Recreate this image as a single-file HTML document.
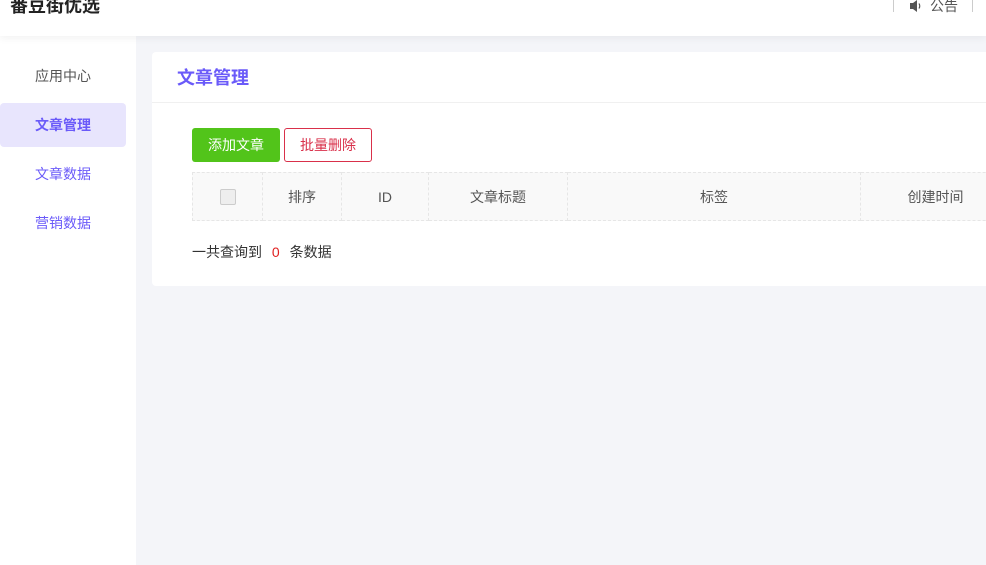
<!DOCTYPE html>
<html><head><meta charset="utf-8"><style>
*{margin:0;padding:0;box-sizing:border-box}
body{width:986px;height:565px;overflow:hidden;background:#f4f5f9;font-family:"Liberation Sans","Noto Sans CJK SC",sans-serif;font-size:14px;color:#333;position:relative}
.hdr{position:absolute;left:0;top:0;width:986px;height:36px;background:#fff;box-shadow:0 2px 8px rgba(0,0,0,.06);z-index:2}
.logo{position:absolute;left:10px;top:-6px;font-size:18px;font-weight:bold;color:#222;line-height:24px}
.sep{position:absolute;top:0;width:1px;height:12px;background:#ccc}
.side{position:absolute;left:0;top:36px;width:136px;height:529px;background:#fff}
.side div{position:absolute;left:0;width:126px;height:44px;line-height:44px;text-align:center;font-size:14px;color:#6a5af9}
.card{position:absolute;left:152px;top:52px;width:900px;height:234px;background:#fff;border-radius:4px}
.ch{height:51px;border-bottom:1px solid #f0f0f0;padding-left:25px;line-height:52px;font-size:18px;font-weight:bold;color:#6a5af9}
.btn{position:absolute;top:76px;height:34px;width:88px;line-height:32px;text-align:center;border-radius:3px;font-size:14px}
table{position:absolute;left:40px;top:120px;border-collapse:collapse;background:#f9f9f9;table-layout:fixed;width:818px}
td{border:1px dashed #e6e6e6;height:48px;text-align:center;color:#555;font-size:14px}
</style></head><body>
<div class="hdr">
<div class="logo">番豆街优选</div>
<div class="sep" style="left:893px"></div>
<svg style="position:absolute;left:909px;top:0" width="14" height="12" viewBox="0 0 14 12"><path d="M1 3h3l4-3v12l-4-3H1z" fill="#555"/><path d="M10 3.5q1.5 2.5 0 5" stroke="#555" fill="none" stroke-width="1.2"/></svg>
<div style="position:absolute;left:930px;top:-3px;font-size:14px;color:#555;line-height:18px">公告</div>
<div class="sep" style="left:972px"></div>
</div>
<div class="side">
<div style="top:18px;color:#555">应用中心</div>
<div style="top:67px;background:#e8e5fd;border-radius:4px;font-weight:bold">文章管理</div>
<div style="top:116px">文章数据</div>
<div style="top:165px">营销数据</div>
</div>
<div class="card">
<div class="ch">文章管理</div>
<div class="btn" style="left:40px;background:#52c41a;color:#fff;line-height:34px">添加文章</div>
<div class="btn" style="left:132px;border:1px solid #d9304a;color:#d9304a">批量删除</div>
<table><colgroup><col style="width:70px"><col style="width:79px"><col style="width:87px"><col style="width:139px"><col style="width:293px"><col style="width:150px"></colgroup><tr>
<td><span style="display:inline-block;width:16px;height:16px;border:1px solid #ccc;border-radius:2px;background:#eee;vertical-align:middle"></span></td>
<td>排序</td><td>ID</td><td>文章标题</td><td>标签</td><td>创建时间</td>
</tr></table>
<div style="position:absolute;left:40px;top:190px;font-size:14px;color:#333">一共查询到 <span style="color:#e02020;margin:0 6px">0</span> 条数据</div>
</div>
</body></html>
